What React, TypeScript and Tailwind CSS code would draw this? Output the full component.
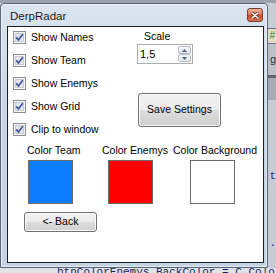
const UI = "font-['Liberation_Sans',Arial,sans-serif]";

function CheckBox({ label }: { label: string }) {
  return (
    <div className="flex h-[13px] items-center gap-[5px]">
      <svg width="13" height="13" viewBox="0 0 13 13" className="shrink-0">
        <rect x="0.5" y="0.5" width="12" height="12" fill="#f6f6f6" stroke="#8e8f8f" />
        <rect x="2.5" y="2.5" width="8" height="8" fill="#e1e5ec" stroke="#c6cbd3" />
        <path d="M3.2 6.4 L5.4 8.9 L9.8 3.2" fill="none" stroke="#3f5597" strokeWidth="1.7" />
      </svg>
      <span className="whitespace-nowrap text-[10.5px] leading-[13px] text-black">{label}</span>
    </div>
  );
}

function ColorPick({ label, color, offset, width }: { label: string; color: string; offset: string; width: string }) {
  return (
    <div className={`flex flex-col ${width}`}>
      <span className="whitespace-nowrap text-[10.5px] leading-[13px] text-black">{label}</span>
      <div className={`mt-[3px] h-[44px] w-[45px] border border-[#6b6b6b] ${color} ${offset}`} />
    </div>
  );
}

function SpinArrow({ up }: { up?: boolean }) {
  return (
    <div className="flex h-[8px] items-center justify-center rounded-[2px] border border-[#b9bec6] bg-[linear-gradient(#f5f7f9,#dfe4ea)]">
      <svg width="5" height="3" viewBox="0 0 5 3">
        <path d={up ? "M0 3 L2.5 0 L5 3 Z" : "M0 0 L2.5 3 L5 0 Z"} fill="#4f5f7a" />
      </svg>
    </div>
  );
}

const BUTTON =
  "flex items-center justify-center rounded-[3px] border border-[#707070] bg-[linear-gradient(#f2f2f2_0%,#ebebeb_50%,#dddddd_50%,#cfcfcf_100%)] shadow-[inset_0_0_0_1px_#fbfbfb] text-[10.5px] text-black";

export default function App() {
  return (
    <div className={`relative h-[273px] w-[276px] overflow-hidden bg-[#c3c9d1] ${UI}`}>
      {/* editor behind the dialog */}
      <div className="flex h-full flex-col">
        <div className="h-[3px] bg-[#9ba2ac]" />
        <div className="h-[25px] bg-[#c8ced6]" />
        <div className="flex h-[16px] justify-end border-y border-[#6c7380] bg-[#e4ddc6] pr-[1px] text-[10px] leading-[14px] text-[#2f7d2f]">#</div>
        <div className="flex h-[31px] items-center justify-end bg-[#bcc1c8] text-[11px] text-[#333]">g</div>
        <div className="h-[3px] bg-[#5f6671]" />
        <div className="h-[22px] bg-[#a5acb6]" />
        <div className="flex flex-1 flex-col items-end gap-[50px] bg-[#c6ccd4] pt-[68px] font-['Liberation_Mono',monospace] text-[11px] text-[#2b2b9a]">
          <span>t</span>
          <span>.</span>
        </div>
        <div className="h-[5px] overflow-visible whitespace-nowrap bg-[#dfe3e8] pl-[57px] font-['Liberation_Mono',monospace] text-[11px] leading-[9px] text-[#1e1e5a]">
          btnColorEnemys.BackColor = C.Colo
        </div>
      </div>

      {/* DerpRadar window */}
      <div className="absolute left-0 top-[3px] flex h-[265px] w-[268px] flex-col rounded-t-[4px] border border-[#56657a] bg-[linear-gradient(180deg,#dbe5f1_0%,#cad7e6_35%,#c5d2e2_100%)] shadow-[inset_0_0_0_1px_rgba(255,255,255,0.55)]">
        <div className="flex h-[22px] shrink-0 items-start justify-between">
          <span className="pl-[9px] pt-[5px] text-[11.5px] leading-[14px] text-[#1b1b1b]">DerpRadar</span>
          <div className="mr-[4px] mt-[4px] flex h-[14px] w-[16px] items-center justify-center rounded-[3px] border border-[#7b3a2c] bg-[linear-gradient(#eeb19d_0%,#d9785c_45%,#c5502f_55%,#d8714f_100%)]">
            <svg width="8" height="7" viewBox="0 0 8 7">
              <path d="M1 1 L7 6 M7 1 L1 6" stroke="#6d2c1f" strokeWidth="3" strokeLinecap="round" />
              <path d="M1 1 L7 6 M7 1 L1 6" stroke="#ffffff" strokeWidth="1.6" strokeLinecap="round" />
            </svg>
          </div>
        </div>

        <div className="ml-[6px] mr-[3px] flex h-[237px] flex-col border border-[#1f1f1f] bg-white">
          <div className="flex">
            <div className="flex w-[129px] flex-col gap-[10px] pl-[5px] pt-[4px]">
              <CheckBox label="Show Names" />
              <CheckBox label="Show Team" />
              <CheckBox label="Show Enemys" />
              <CheckBox label="Show Grid" />
              <CheckBox label="Clip to window" />
            </div>
            <div className="flex flex-col pt-[3px]">
              <span className="ml-[7px] text-[10.5px] leading-[13px] text-black">Scale</span>
              <div className="mt-[1px] flex h-[20px] w-[56px] items-stretch border border-[#abadb3] bg-white py-[1px] pr-[1px]">
                <span className="flex-1 pl-[2px] text-[11px] leading-[16px] text-black">1,5</span>
                <div className="flex w-[13px] flex-col gap-0">
                  <SpinArrow up />
                  <SpinArrow />
                </div>
              </div>
              <button className={`ml-[1px] mt-[29px] h-[34px] w-[83px] ${BUTTON}`}>Save Settings</button>
            </div>
          </div>

          <div className="mt-[8px] flex pl-[19px]">
            <ColorPick label="Color Team" color="bg-[#0a7cff]" offset="ml-[1px]" width="w-[75px]" />
            <ColorPick label="Color Enemys" color="bg-[#ff0000]" offset="ml-[6px]" width="w-[71px]" />
            <ColorPick label="Color Background" color="bg-white" offset="ml-[17px]" width="w-auto" />
          </div>

          <button className={`ml-[16px] mt-[8px] h-[20px] w-[73px] ${BUTTON}`}>&lt;- Back</button>
        </div>
      </div>
    </div>
  );
}
